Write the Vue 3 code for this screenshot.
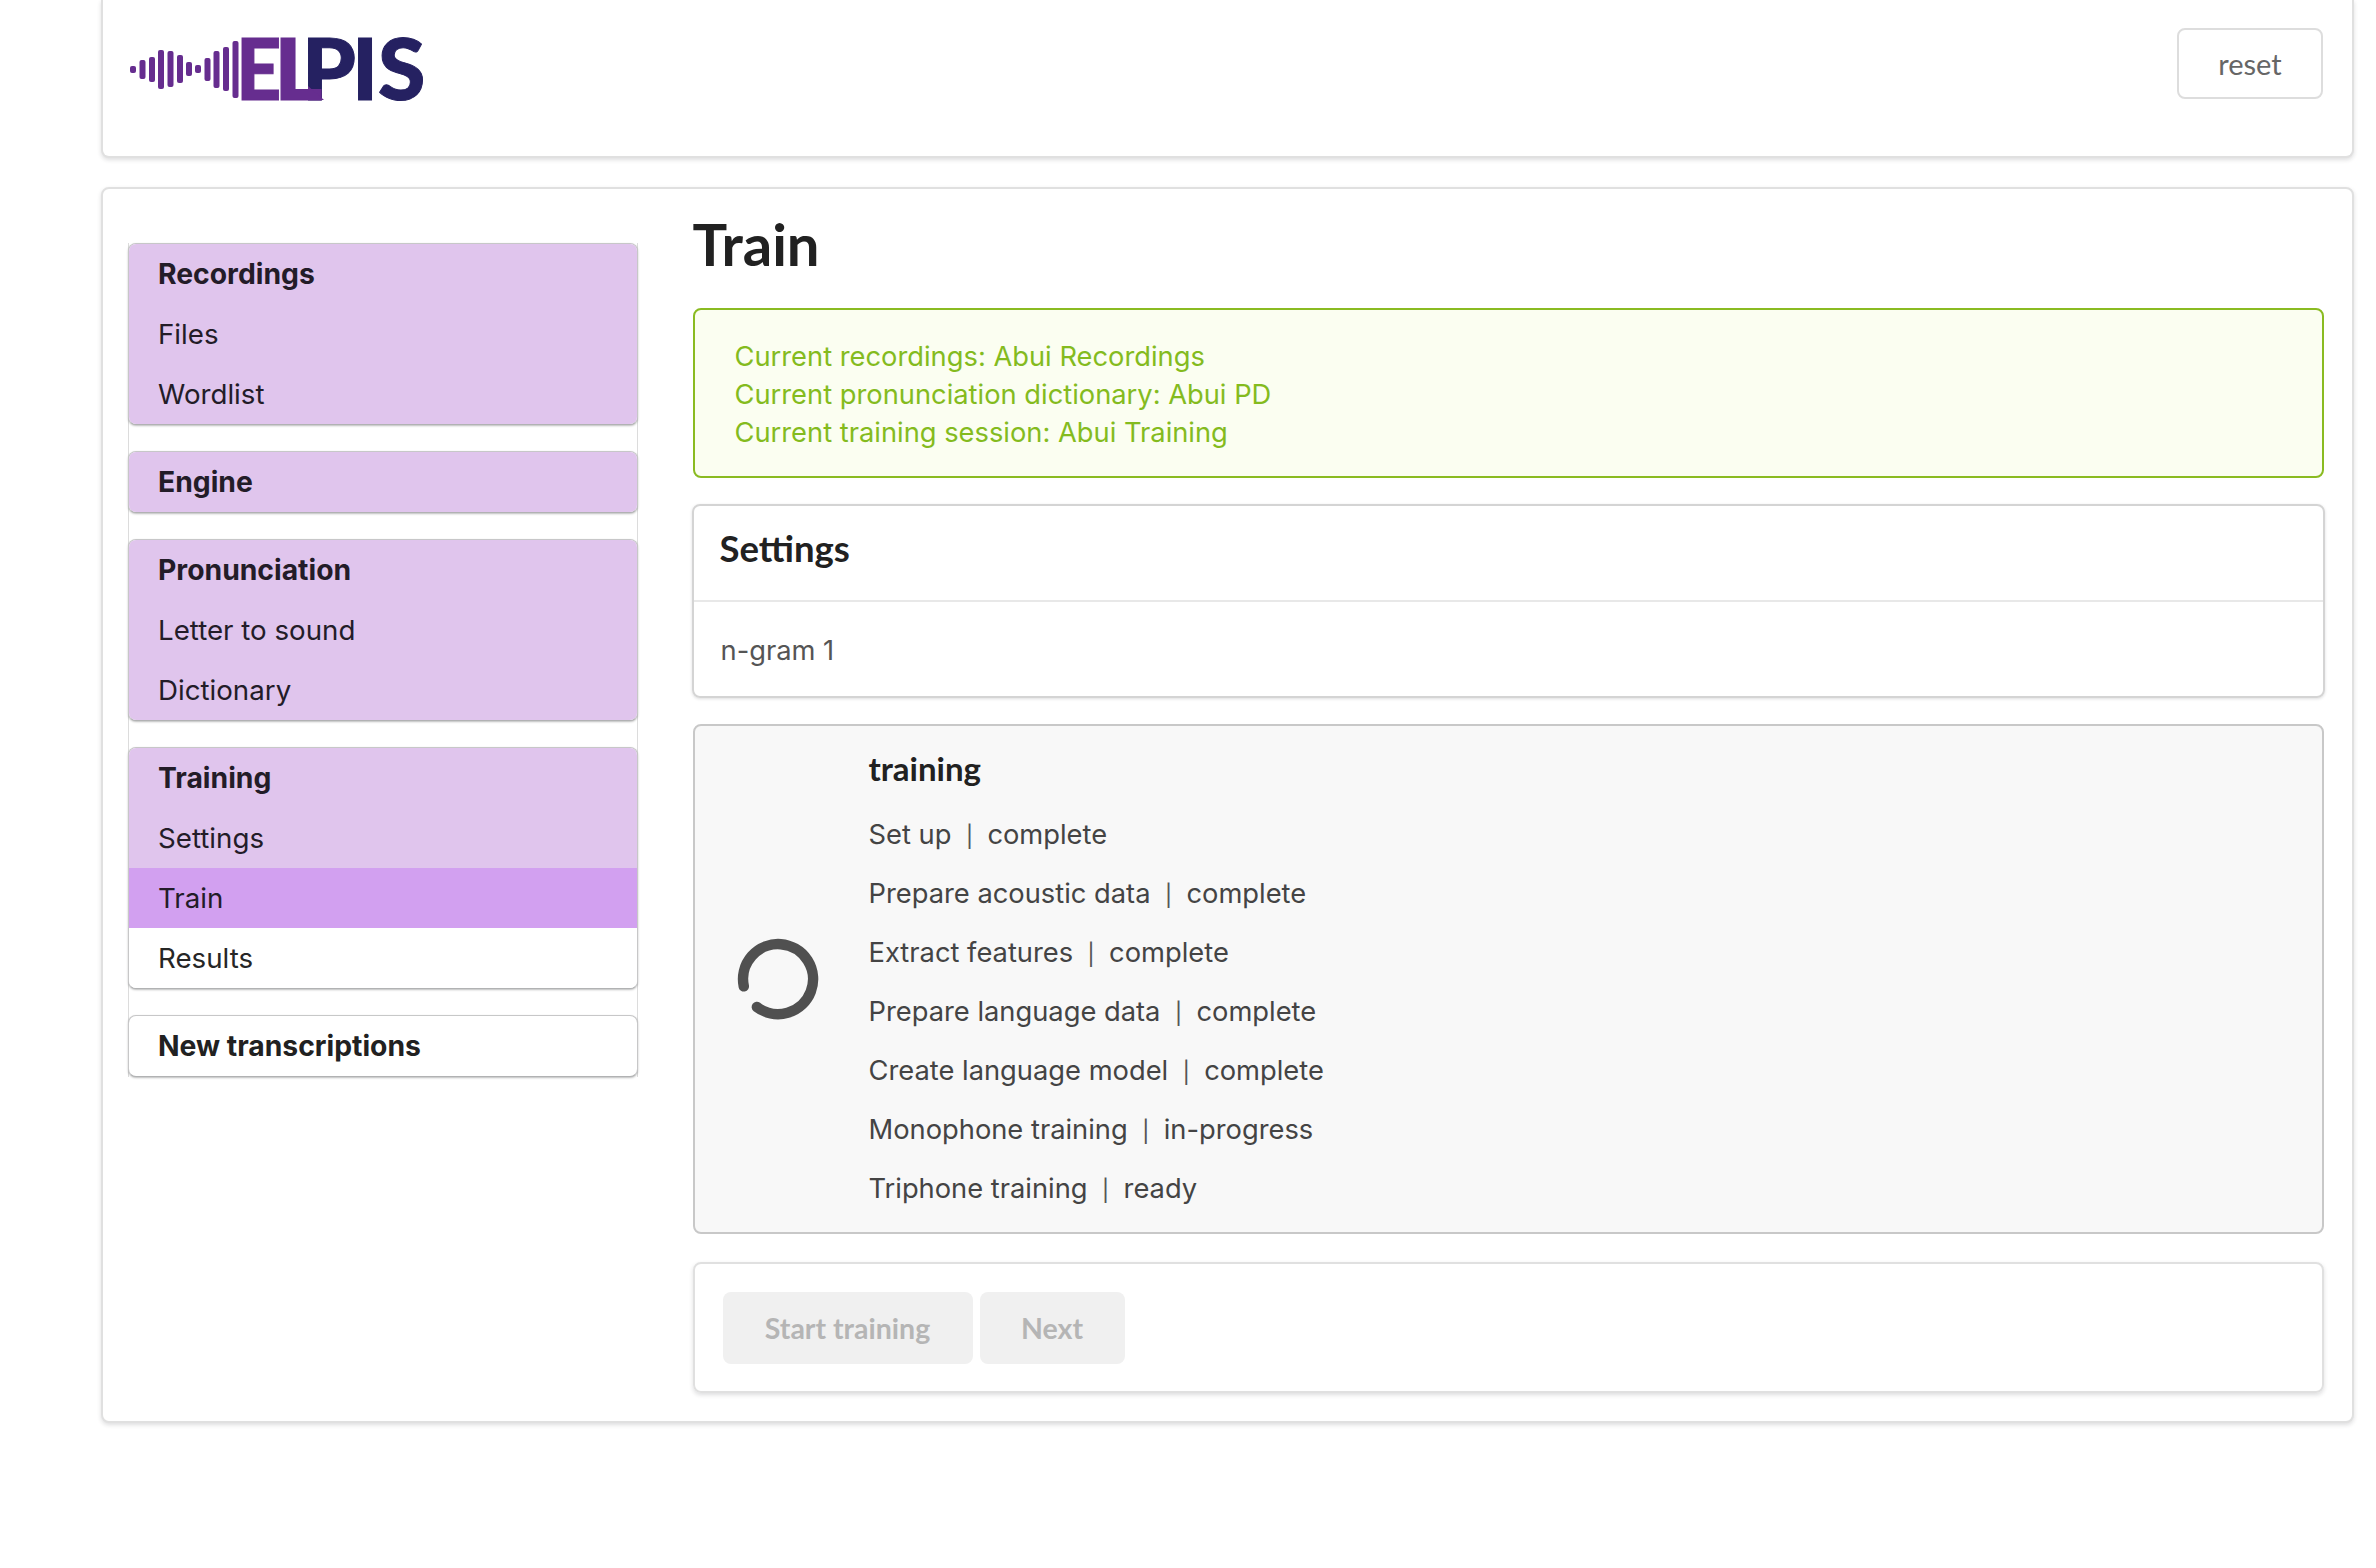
<script setup>
const bars = [
  [133, 66, 73], [142.5, 60, 79], [152, 57, 82], [161, 50, 89], [170.5, 51, 87], [180, 55, 83],
  [189, 62, 76], [198, 65, 73], [207.5, 58, 81], [216.5, 51, 88], [226, 47, 91], [235.5, 41, 98]
]

const groups = [
  { title: 'Recordings', filled: true, items: ['Files', 'Wordlist'] },
  { title: 'Engine', filled: true, items: [] },
  { title: 'Pronunciation', filled: true, items: ['Letter to sound', 'Dictionary'] },
  { title: 'Training', filled: true, items: ['Settings', 'Train', 'Results'] },
  { title: 'New transcriptions', filled: false, items: [] }
]

const steps = [
  ['Set up', 'complete'],
  ['Prepare acoustic data', 'complete'],
  ['Extract features', 'complete'],
  ['Prepare language data', 'complete'],
  ['Create language model', 'complete'],
  ['Monophone training', 'in-progress'],
  ['Triphone training', 'ready']
]

function itemClass(item) {
  if (item === 'Train') return 'item active'
  if (item === 'Results') return 'item plain'
  return 'item'
}
</script>

<template>
  <div class="page">
    <header class="card top">
      <div class="logo">
        <svg class="bars" viewBox="130 30 110 80" width="110" height="80">
          <rect v-for="b in bars" :key="b[0]" :x="b[0] - 3" :y="b[1]" width="6" :height="b[2] - b[1]" rx="2" fill="#662d8f" />
        </svg>
        <div class="word">
          <span class="e">E</span><span class="l">L</span><span class="p">P</span><span class="i">I</span><span class="s">S</span>
        </div>
        <span class="notch"></span>
      </div>
      <button class="reset">reset</button>
    </header>

    <div class="card content">
      <nav class="sidebar">
        <div v-for="g in groups" :key="g.title" class="group" :class="{ filled: g.filled }">
          <div class="item head">{{ g.title }}</div>
          <div v-for="item in g.items" :key="item" :class="itemClass(item)">{{ item }}</div>
        </div>
      </nav>

      <main class="main">
        <h1>Train</h1>

        <div class="alert">
          <div>Current recordings: Abui Recordings</div>
          <div>Current pronunciation dictionary: Abui PD</div>
          <div>Current training session: Abui Training</div>
        </div>

        <section class="settings">
          <h2>Settings</h2>
          <div class="settings-body">n-gram 1</div>
        </section>

        <section class="progress">
          <svg class="spinner" viewBox="0 0 100 100" width="100" height="100">
            <path d="M15.8 57.3 A35 35 0 1 1 28.9 78" fill="none" stroke="#505050" stroke-width="10.5" stroke-linecap="round" />
          </svg>
          <div class="steps">
            <h3>training</h3>
            <div v-for="s in steps" :key="s[0]" class="step">{{ s[0] }}<span class="sep">|</span>{{ s[1] }}</div>
          </div>
        </section>

        <div class="actions">
          <button class="btn start" disabled>Start training</button>
          <button class="btn next" disabled>Next</button>
        </div>
      </main>
    </div>
  </div>
</template>

<style>
body {
  background: #fff;
}
</style>

<style scoped>
.page {
  width: 2376px;
  height: 1568px;
  box-sizing: border-box;
  padding: 0 22px 0 100.5px;
  font-family: Inter, "Liberation Sans", sans-serif;
  color: #212121;
  overflow: hidden;
}
.card {
  background: #fff;
  border: 2px solid #e0e0e0;
  border-radius: 8px;
  box-shadow: 0 2px 4px rgba(34, 36, 38, 0.15);
  box-sizing: border-box;
}
.top {
  height: 158px;
  border-top: none;
  border-top-left-radius: 0;
  border-top-right-radius: 0;
  display: flex;
  justify-content: space-between;
  align-items: flex-start;
  padding: 28px 29px 0 27.5px;
}
.logo {
  position: relative;
  display: flex;
  margin-top: 2px;
  height: 80px;
}
.bars {
  display: block;
  flex: none;
  margin-right: -4px;
}
.word {
  display: flex;
  margin-top: -6px;
  height: 86px;
  line-height: 86px;
  font-family: Lato, sans-serif;
  font-weight: 900;
  font-size: 86px;
  color: #252161;
  -webkit-text-stroke: 1px currentColor;
}
.word span {
  display: block;
  transform-origin: left center;
}
.word .e {
  width: 38px;
  color: #662d8f;
  transform: scaleX(0.92);
}
.word .l {
  width: 28px;
  color: #662d8f;
  transform: scaleX(1.08);
}
.word .p {
  width: 50px;
}
.word .i {
  width: 26px;
}
.word .s {
  width: 46px;
}
.notch {
  position: absolute;
  left: 178px;
  top: 56px;
  width: 16px;
  height: 14px;
  background: #662d8f;
  clip-path: polygon(0 0, 100% 100%, 0 100%);
}
.reset {
  width: 146px;
  height: 71px;
  background: #fff;
  border: 2px solid #ddd;
  border-radius: 8px;
  font-family: Lato, sans-serif;
  font-size: 29px;
  color: #666;
}
.content {
  margin-top: 28.5px;
  height: 1236.5px;
  display: flex;
  gap: 54.5px;
  padding: 0 28px 0 25.5px;
}
.sidebar {
  width: 510px;
  flex: none;
  box-sizing: border-box;
  margin-top: 54px;
  align-self: flex-start;
  display: flex;
  flex-direction: column;
  gap: 26px;
  border-left: 1px solid #dcdcdc;
  border-right: 1px solid #dcdcdc;
}
.group {
  margin: 0 -1px;
  border: 1px solid rgba(34, 36, 38, 0.25);
  border-bottom-color: rgba(34, 36, 38, 0.35);
  border-radius: 8px;
  overflow: hidden;
  background: #fff;
  box-shadow: 0 1px 2px rgba(34, 36, 38, 0.3);
}
.item {
  height: 60px;
  line-height: 61px;
  padding-left: 29px;
  font-size: 27.7px;
  color: #231c28;
}
.filled .item {
  background: #e0c5ed;
}
.item.head {
  font-weight: 700;
  font-size: 28.3px;
}
.group:not(.filled) .item.head {
  color: #212121;
}
.filled .item.active {
  background: #d2a0f0;
}
.filled .item.plain {
  background: #fff;
  color: #262626;
}
.main {
  flex: 1;
  min-width: 0;
  padding-top: 22.5px;
}
h1 {
  margin: 0 0 31px;
  height: 66px;
  line-height: 66px;
  font-family: Lato, sans-serif;
  font-weight: 700;
  font-size: 58px;
  color: #212121;
}
.alert {
  height: 170px;
  box-sizing: border-box;
  padding: 28px 40px 0;
  background: #fbfef1;
  border: 2px solid #8abb21;
  border-radius: 8px;
  font-size: 27.3px;
  line-height: 38px;
  color: #84bb1e;
}
.settings {
  margin: 26px -1px 0;
  height: 194px;
  box-sizing: border-box;
  border: 2px solid #d4d4d4;
  border-radius: 8px;
  box-shadow: 0 1px 3px rgba(34, 36, 38, 0.15);
}
h2 {
  margin: 0;
  height: 96px;
  line-height: 84px;
  padding-left: 26px;
  border-bottom: 2px solid #e8e8e8;
  box-sizing: border-box;
  font-family: Lato, sans-serif;
  font-weight: 700;
  font-size: 36.5px;
  color: #212121;
}
.settings-body {
  padding-left: 27px;
  height: 94px;
  line-height: 98px;
  font-size: 27.3px;
  color: #555;
}
.progress {
  margin-top: 26px;
  height: 510px;
  box-sizing: border-box;
  display: flex;
  align-items: center;
  gap: 41px;
  padding-left: 33px;
  background: #f8f8f8;
  border: 2px solid #c8c8c8;
  border-radius: 8px;
}
.spinner {
  flex: none;
}
h3 {
  margin: 0 0 14px;
  height: 46px;
  line-height: 46px;
  font-family: Lato, sans-serif;
  font-weight: 700;
  font-size: 33px;
  color: #212121;
}
.steps {
  font-family: Inter, sans-serif;
  padding-top: 4px;
}
.step {
  height: 59px;
  line-height: 59px;
  font-size: 27.3px;
  color: #444;
}
.sep {
  display: inline-block;
  width: 7px;
  margin: 0 14.5px;
  text-align: center;
  font-family: Lato, sans-serif;
  font-size: 26px;
  color: #555;
}
.actions {
  margin-top: 28px;
  height: 131px;
  box-sizing: border-box;
  display: flex;
  gap: 7px;
  padding: 28px;
  border: 2px solid #e0e0e0;
  border-radius: 8px;
  box-shadow: 0 2px 4px rgba(34, 36, 38, 0.15);
}
.btn {
  height: 72px;
  border: none;
  border-radius: 8px;
  background: #f0f0f0;
  font-family: Lato, sans-serif;
  font-weight: 700;
  font-size: 28.5px;
  color: #b5b5b5;
}
.start {
  width: 250px;
}
.next {
  width: 145px;
}
</style>
